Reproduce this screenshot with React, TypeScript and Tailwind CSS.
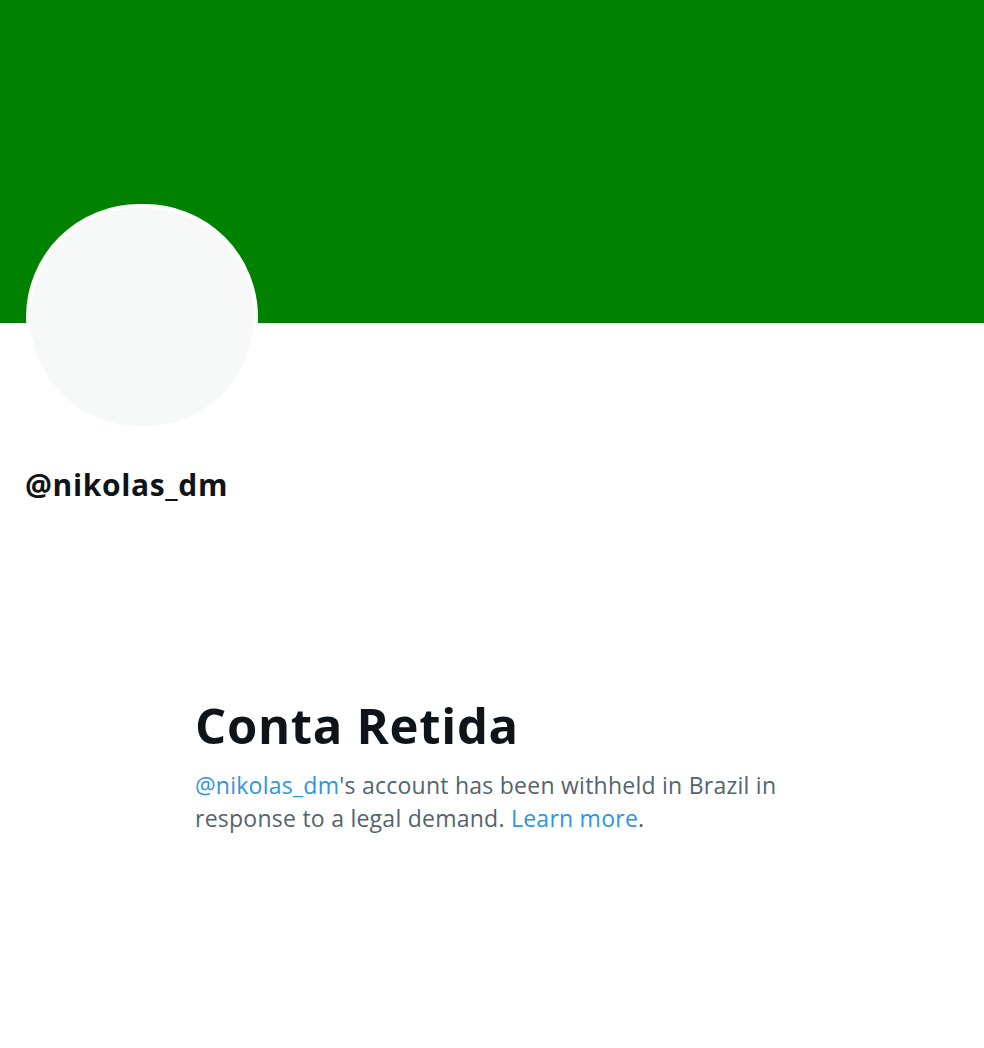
import React from 'react';

export default function App() {
  return (
    <div className="w-[984px] h-[1048px] bg-white overflow-hidden font-['Open_Sans',sans-serif]">
      <div className="h-[323px] bg-[#008200]" />
      <div className="-mt-[119px] ml-[26px] w-[232px] h-[226px] rounded-full border-4 border-white bg-[#f7f9f9]" />
      <h2 className="mt-[37px] ml-[25px] text-[30px] leading-[36px] tracking-[0.65px] font-bold text-[#0f1419]">@nikolas_dm</h2>
      <div className="mt-[193px] ml-[195px] w-[640px]">
        <h1 className="text-[49px] leading-[58px] tracking-[0.7px] font-bold text-[#0f1419]">Conta Retida</h1>
        <p className="mt-[15px] text-[23px] leading-[33px] tracking-[0.25px] text-[#536471]">
          <span className="text-[#2f96dc]">@nikolas_dm</span>'s account has been withheld in Brazil in<br />
          response to a legal demand.{' '}
          <span className="text-[#2f96dc]">Learn more</span>.
        </p>
      </div>
    </div>
  );
}
